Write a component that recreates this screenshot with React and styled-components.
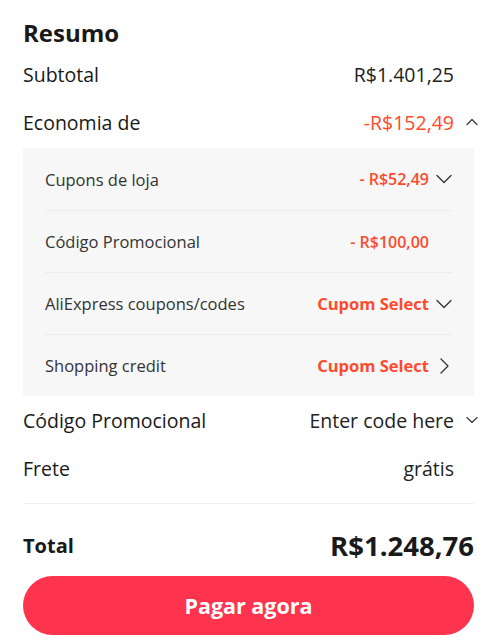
import React from 'react'
import styled, {createGlobalStyle} from 'styled-components'

const GlobalStyle = createGlobalStyle`
    body {
        margin: 0;
        background: #fff;
        font-family: "Open Sans", "Liberation Sans", sans-serif;
        color: #191919;
    }
`

const Summary = styled.div`
    display: flex;
    flex-direction: column;
    padding: 14px 26px 0 23px;
`

const Title = styled.h2`
    margin: 0;
    font-size: 24px;
    font-weight: 700;
    line-height: 38px;
`

const Row = styled.div`
    display: flex;
    align-items: center;
    justify-content: space-between;
    height: ${props => props.h || 48}px;
    margin-right: -4px;
    font-size: 19.5px;
`

const Value = styled.div`
    display: flex;
    align-items: center;
    color: ${props => (props.red ? '#ff4a2c' : '#222')};
`

const IconSlot = styled.span`
    display: inline-flex;
    width: 24px;
    justify-content: flex-end;
    color: #333;
`

const Panel = styled.div`
    background: #f7f7f7;
    padding: 0 22px;
`

const SubRow = styled.div`
    display: flex;
    align-items: center;
    justify-content: space-between;
    height: 62px;
    box-sizing: border-box;
    font-size: 16.5px;
    color: #333;
    border-top: ${props => (props.first ? 'none' : '1px solid #ececec')};
`

const SubValue = styled.div`
    display: flex;
    align-items: center;
    gap: 6px;
    color: #ff4a2c;
    font-size: ${props => (props.large ? 16.5 : 16)}px;
    font-weight: ${props => (props.large ? 700 : 600)};
`

const SubIcon = styled.span`
    display: inline-flex;
    width: 17px;
    justify-content: center;
    color: #333;
`

const Divider = styled.div`
    height: 1px;
    background: #ededed;
    margin-top: 11px;
`

const TotalRow = styled.div`
    display: flex;
    align-items: center;
    justify-content: space-between;
    box-sizing: border-box;
    height: 72px;
    padding-top: 10px;
`

const TotalLabel = styled.span`
    font-size: 20px;
    font-weight: 700;
`

const TotalValue = styled.span`
    font-size: 27.5px;
    font-weight: 700;
    color: #1a1a1a;
`

const PayButton = styled.button`
    height: 59px;
    border: none;
    border-radius: 30px;
    background: #fe344f;
    color: #fff;
    font-family: inherit;
    font-size: 21.5px;
    font-weight: 700;
    cursor: pointer;
`

const shapes = {
    down: {w: 16, h: 10, d: 'M1 1.5l7 7 7-7'},
    up: {w: 12, h: 8, d: 'M1 6.5l5-5 5 5'},
    small: {w: 12, h: 8, d: 'M1 1.5l5 5 5-5'},
    right: {w: 10, h: 16, d: 'M2 1l7 7-7 7'},
}

const Chevron = ({dir = 'down', stroke = 1.3}) => {
    const s = shapes[dir]
    return (
        <svg width={s.w} height={s.h} viewBox={`0 0 ${s.w} ${s.h}`} fill="none">
            <path d={s.d} stroke="currentColor" strokeWidth={stroke} strokeLinecap="round" strokeLinejoin="round" />
        </svg>
    )
}

const App = () => (
    <>
        <GlobalStyle />
        <Summary>
            <Title>Resumo</Title>
            <Row h={44}>
                <span>Subtotal</span>
                <Value>R$1.401,25<IconSlot /></Value>
            </Row>
            <Row h={52}>
                <span>Economia de</span>
                <Value red>-R$152,49<IconSlot><Chevron dir="up" stroke={1.2} /></IconSlot></Value>
            </Row>
            <Panel>
                <SubRow first>
                    <span>Cupons de loja</span>
                    <SubValue>- R$52,49<SubIcon><Chevron dir="down" /></SubIcon></SubValue>
                </SubRow>
                <SubRow>
                    <span>Código Promocional</span>
                    <SubValue>- R$100,00<SubIcon /></SubValue>
                </SubRow>
                <SubRow>
                    <span>AliExpress coupons/codes</span>
                    <SubValue large>Cupom Select<SubIcon><Chevron dir="down" /></SubIcon></SubValue>
                </SubRow>
                <SubRow>
                    <span>Shopping credit</span>
                    <SubValue large>Cupom Select<SubIcon><Chevron dir="right" /></SubIcon></SubValue>
                </SubRow>
            </Panel>
            <Row h={48}>
                <span>Código Promocional</span>
                <Value>Enter code here<IconSlot><Chevron dir="small" stroke={1.1} /></IconSlot></Value>
            </Row>
            <Row h={48}>
                <span>Frete</span>
                <Value>grátis<IconSlot /></Value>
            </Row>
            <Divider />
            <TotalRow>
                <TotalLabel>Total</TotalLabel>
                <TotalValue>R$1.248,76</TotalValue>
            </TotalRow>
            <PayButton>Pagar agora</PayButton>
        </Summary>
    </>
)

export default App
